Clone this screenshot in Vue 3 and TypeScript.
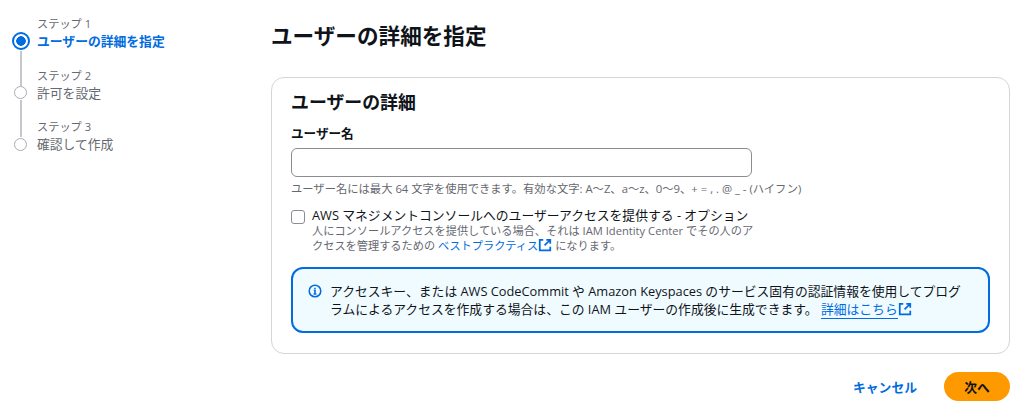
<script setup lang="ts">
const steps = [
  { label: 'ステップ 1', title: 'ユーザーの詳細を指定', active: true },
  { label: 'ステップ 2', title: '許可を設定', active: false },
  { label: 'ステップ 3', title: '確認して作成', active: false },
]
</script>

<template>
  <div class="page">
    <nav class="steps">
      <div v-for="(step, i) in steps" :key="step.label" class="step" :class="{ 'step--active': step.active }">
        <div class="step-rail">
          <span class="step-dot"></span>
          <span v-if="i < steps.length - 1" class="step-line"></span>
        </div>
        <div class="step-text">
          <div class="step-label">{{ step.label }}</div>
          <div class="step-title">{{ step.title }}</div>
        </div>
      </div>
    </nav>

    <main class="main">
      <h1 class="heading">ユーザーの詳細を指定</h1>
      <section class="card">
        <h2 class="card-title">ユーザーの詳細</h2>
        <label class="field-label">ユーザー名</label>
        <input class="field-input" type="text" />
        <p class="field-hint">ユーザー名には最大 64 文字を使用できます。有効な文字: A～Z、a～z、0～9、+ = , . @ _ - (ハイフン)</p>

        <div class="check">
          <span class="check-box"></span>
          <div class="check-body">
            <div class="check-label">AWS マネジメントコンソールへのユーザーアクセスを提供する - オプション</div>
            <div class="check-desc">
              人にコンソールアクセスを提供している場合、それは IAM Identity Center でその人のアクセスを管理するための
              <a class="link">ベストプラクティス</a>
              <svg class="ext" viewBox="0 0 16 16"><path d="M9.5 2H14v4.5M14 2L7.5 8.5M6 2H2v12h12v-4" /></svg>
              になります。
            </div>
          </div>
        </div>

        <div class="alert">
          <svg class="alert-icon" viewBox="0 0 16 16">
            <circle cx="8" cy="8" r="6.6" />
            <path d="M6.6 7.2H8v4M6.4 11.4h3.2" />
            <path d="M8 4.2v1.4" />
          </svg>
          <div class="alert-text">
            アクセスキー、または AWS CodeCommit や Amazon Keyspaces のサービス固有の認証情報を使用してプログラムによるアクセスを作成する場合は、この IAM ユーザーの作成後に生成できます。
            <a class="link link--under">詳細はこちら</a>
            <svg class="ext" viewBox="0 0 16 16"><path d="M9.5 2H14v4.5M14 2L7.5 8.5M6 2H2v12h12v-4" /></svg>
          </div>
        </div>
      </section>

      <div class="actions">
        <button class="btn-cancel" type="button">キャンセル</button>
        <button class="btn-next" type="button">次へ</button>
      </div>
    </main>
  </div>
</template>

<style>
html, body {
  margin: 0;
  background: #fff;
}
</style>

<style scoped>
.page {
  display: flex;
  width: 1024px;
  height: 412px;
  overflow: hidden;
  box-sizing: border-box;
  font-family: 'Open Sans', 'Noto Sans CJK JP', sans-serif;
  font-size: 11.2px;
  color: #0f141a;
}
.steps {
  width: 271px;
  flex: none;
  padding: 15px 0 0 13px;
  box-sizing: border-box;
}
.step {
  display: flex;
  gap: 9px;
  height: 51.5px;
}
.step-rail {
  width: 15px;
  display: flex;
  flex-direction: column;
  align-items: center;
  padding-top: 19.5px;
}
.step-dot {
  width: 13px;
  height: 13px;
  flex: none;
  box-sizing: border-box;
  border: 1.5px solid #a9adb4;
  border-radius: 50%;
  background: #fff;
}
.step--active .step-dot {
  width: 18px;
  height: 18px;
  margin-top: -2.5px;
  border: 2px solid #006ce0;
  background: radial-gradient(circle, #006ce0 0 4.5px, #fff 5px);
}
.step-line {
  width: 2px;
  flex: 1;
  margin: 1px 0 -19px;
  background: #c6c6cd;
}
.step-label {
  font-size: 11.2px;
  line-height: 17px;
  color: #656871;
}
.step-title {
  font-size: 12.8px;
  line-height: 19px;
  color: #656871;
}
.step--active .step-title {
  color: #006ce0;
  font-weight: 700;
}
.main {
  flex: none;
  width: 739px;
  padding-top: 22px;
  box-sizing: border-box;
}
.heading {
  margin: 0 0 27px;
  font-size: 21.6px;
  line-height: 28px;
  font-weight: 700;
}
.card {
  box-sizing: border-box;
  height: 277px;
  padding: 12px 19px 0;
  border: 1px solid #d4d4da;
  border-radius: 13px;
}
.card-title {
  margin: 0 0 11px;
  font-size: 17.9px;
  line-height: 24px;
  font-weight: 700;
}
.field-label {
  display: block;
  font-size: 12.6px;
  line-height: 18px;
  font-weight: 700;
}
.field-input {
  display: block;
  box-sizing: border-box;
  width: 461px;
  height: 29px;
  margin: 5px 0 4px;
  border: 1px solid #8c8c94;
  border-radius: 6px;
  background: #fff;
  outline: none;
}
.field-hint {
  margin: 0 0 12px;
  font-size: 11.3px;
  line-height: 15px;
  color: #656871;
  white-space: nowrap;
}
.check {
  display: flex;
  gap: 7px;
}
.check-box {
  box-sizing: border-box;
  width: 14px;
  height: 14px;
  margin-top: 2px;
  border: 1px solid #8c8c94;
  border-radius: 3px;
  flex: none;
}
.check-body {
  width: 444px;
}
.check-label {
  font-size: 12.8px;
  line-height: 15px;
  white-space: nowrap;
  color: #0f141a;
}
.check-desc {
  font-size: 11.2px;
  line-height: 15px;
  color: #656871;
}
.link {
  color: #006ce0;
}
.link--under {
  border-bottom: 1px solid #006ce0;
}
.ext {
  display: inline-block;
  width: 14px;
  height: 14px;
  vertical-align: -2px;
  fill: none;
  stroke: #006ce0;
  stroke-width: 2;
}
.alert {
  box-sizing: border-box;
  display: flex;
  gap: 8px;
  height: 66px;
  margin-top: 14px;
  padding: 13px 15px 0 15px;
  background: #f0fbff;
  border: 2px solid #006ce0;
  border-radius: 12px;
}
.alert-icon {
  width: 14px;
  height: 14px;
  margin-top: 2px;
  flex: none;
  fill: none;
  stroke: #006ce0;
  stroke-width: 1.8;
}
.alert-text {
  font-size: 12.8px;
  line-height: 18px;
  color: #0f141a;
}
.actions {
  display: flex;
  justify-content: flex-end;
  align-items: center;
  gap: 27px;
  margin-top: 18px;
}
.btn-cancel,
.btn-next {
  font-family: inherit;
  font-size: 12.8px;
  font-weight: 700;
  border: none;
  padding: 0;
}
.btn-cancel {
  background: none;
  color: #006ce0;
}
.btn-next {
  width: 66px;
  height: 29px;
  border-radius: 15px;
  background: #ff9900;
  color: #0f141a;
}
</style>
